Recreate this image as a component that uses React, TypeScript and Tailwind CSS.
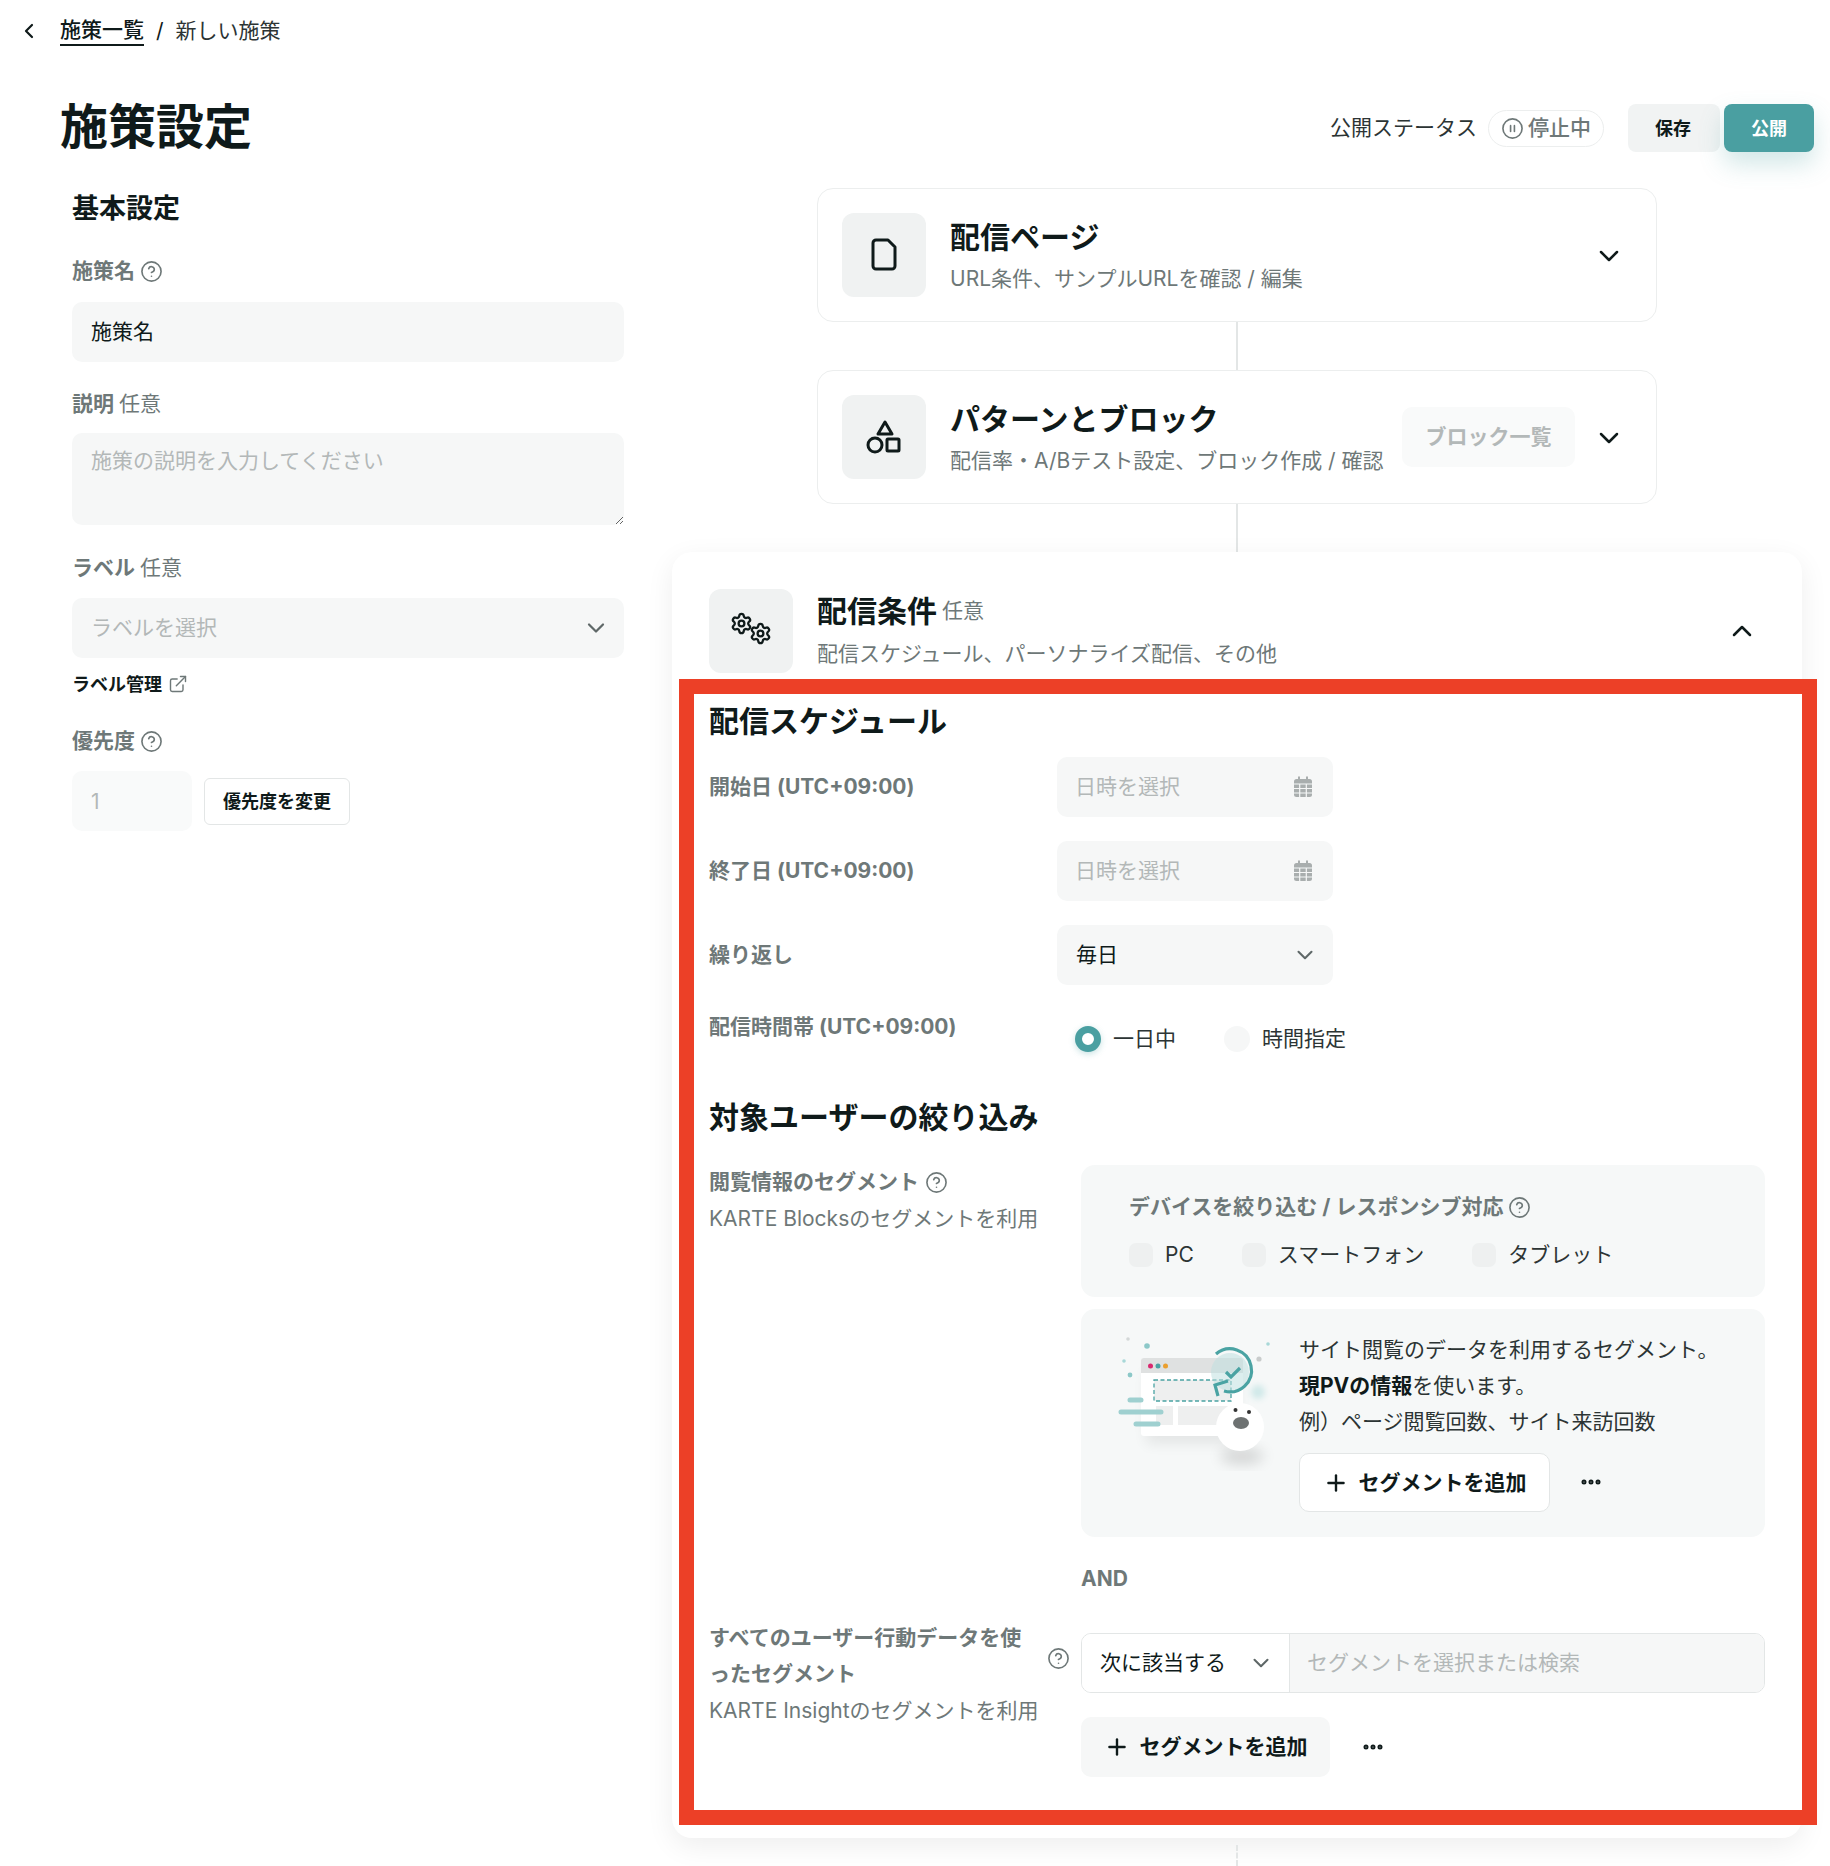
import React from 'react';
import { ChevronDown, ChevronLeft, ChevronUp, CircleHelp, CirclePause, Ellipsis, ExternalLink, Plus, Settings } from 'lucide-react';

const Help = ({ size = 23 }: { size?: number }) => <CircleHelp size={size} strokeWidth={1.7} className="text-[#6e7878] shrink-0" />;

const Label = ({ children, opt, help }: { children: React.ReactNode; opt?: boolean; help?: boolean }) => (
  <div className="flex items-center gap-[5px] h-[30px] text-[21px] leading-[30px] font-bold text-[#6e7878]">
    <span>{children}</span>
    {opt && <span className="font-normal">任意</span>}
    {help && <Help />}
  </div>
);

const Calendar = () => (
  <svg width="20" height="22" viewBox="0 0 20 22" className="shrink-0">
    <rect x="1" y="3" width="18" height="18" rx="2.5" fill="#a9aeae" />
    <rect x="5" y="0.5" width="2" height="4" fill="#a9aeae" />
    <rect x="13" y="0.5" width="2" height="4" fill="#a9aeae" />
    <path d="M1 8h18M1 12.5h18M1 17h18M6.7 8v13M13.3 8v13" stroke="#f6f7f7" strokeWidth="1.2" />
  </svg>
);

const DateField = () => (
  <div className="flex items-center justify-between w-[276px] h-[60px] pl-[18px] pr-[20px] pb-[1px] bg-[#f6f7f7] rounded-[10px] text-[21px] text-[#b3b8b8]">
    <span>日時を選択</span>
    <Calendar />
  </div>
);

const Row = ({ label, children }: { label: string; children: React.ReactNode }) => (
  <div className="flex items-center">
    <div className="w-[348px] text-[21px] font-bold text-[#6e7878]">{label}</div>
    {children}
  </div>
);

const Tile = ({ children }: { children: React.ReactNode }) => (
  <div className="flex items-center justify-center w-[84px] h-[84px] shrink-0 rounded-[12px] bg-[#f0f2f2]">{children}</div>
);

const Checkbox = ({ label }: { label: string }) => (
  <label className="flex items-center gap-[12px] h-[24px] text-[21px] text-[#2c3434]">
    <span className="w-[24px] h-[24px] rounded-[7px] bg-[#eef0f0]" />
    {label}
  </label>
);

const Illustration = () => (
  <svg width="199" height="160" viewBox="0 0 199 160" className="shrink-0">
    <defs>
      <filter id="soft" x="-40%" y="-40%" width="180%" height="180%"><feGaussianBlur stdDeviation="7" /></filter>
      <filter id="soft2" x="-40%" y="-40%" width="180%" height="180%"><feGaussianBlur stdDeviation="3" /></filter>
    </defs>
    <rect x="46" y="50" width="92" height="74" fill="#000" opacity="0.07" filter="url(#soft)" />
    <circle cx="28" cy="19" r="1.8" fill="#d4d8d8" />
    <circle cx="47" cy="26" r="2.8" fill="#8cc8c8" />
    <circle cx="24" cy="41" r="1.8" fill="#a8d8d8" />
    <circle cx="30" cy="55" r="2.4" fill="#8cc8c8" />
    <circle cx="168" cy="24" r="1.8" fill="#a8d8d8" />
    <circle cx="159" cy="39" r="2.6" fill="#c9cccc" />
    <circle cx="158" cy="72" r="7" fill="#cfe8e8" filter="url(#soft2)" />
    <rect x="41" y="38" width="102" height="78" rx="3" fill="#ffffff" />
    <path d="M41 53V41a3 3 0 0 1 3-3h96a3 3 0 0 1 3 3v12z" fill="#dfe1e1" />
    <circle cx="50.5" cy="46" r="2.5" fill="#d9286f" />
    <circle cx="58" cy="46" r="2.5" fill="#4aa3a3" />
    <circle cx="65.5" cy="46" r="2.5" fill="#eb9f2e" />
    <rect x="54" y="60" width="77" height="21" fill="#eeefef" stroke="#4aa3a3" strokeWidth="1.3" strokeDasharray="4 2.5" />
    <rect x="56" y="86" width="17" height="19" fill="#eeefef" />
    <rect x="78" y="86" width="52" height="19" fill="#eeefef" />
    <path d="M30 80h11M21 92h40M36 104h22" stroke="#9fd0d0" strokeWidth="5" strokeLinecap="round" />
    <circle cx="130" cy="52" r="19" fill="#bfe0e0" opacity="0.55" />
    <path d="M116 34a21.5 21.5 0 1 1 8 37" fill="none" stroke="#4aa3a3" strokeWidth="3.2" />
    <path d="M126 52l5 5 9-9" fill="none" stroke="#4aa3a3" strokeWidth="3.2" />
    <path d="M118 76l-3-11 13-4" fill="none" stroke="#4aa3a3" strokeWidth="3.2" />
    <ellipse cx="142" cy="136" rx="22" ry="8" fill="#000" opacity="0.14" filter="url(#soft)" />
    <circle cx="140" cy="107" r="24" fill="#ffffff" />
    <circle cx="135.5" cy="90" r="2" fill="#333" />
    <circle cx="149" cy="92" r="2" fill="#333" />
    <ellipse cx="141" cy="103" rx="8" ry="6" fill="#6d7171" />
  </svg>
);

export default function App() {
  return (
    <div className="relative w-[1830px] h-[1866px] overflow-hidden bg-white text-[#0f1a1a] [font-family:Inter,'Noto_Sans_CJK_JP',sans-serif]">
      <div className="flex items-center h-[62px] pl-[17px] text-[21px]">
        <ChevronLeft size={24} strokeWidth={2.2} />
        <span className="ml-[19px] font-medium border-b-2 border-[#0f1a1a] leading-[28px]">施策一覧</span>
        <span className="ml-[12px]">/</span>
        <span className="ml-[12px] text-[#2c3434]">新しい施策</span>
      </div>

      <div className="flex items-center justify-between mt-[42px] h-[48px] pl-[60px] pr-[16px]">
        <h1 className="-mt-[3px] text-[48px] font-bold leading-[48px]">施策設定</h1>
        <div className="flex items-center">
          <span className="-mt-[1px] text-[21px] text-[#2c3434]">公開ステータス</span>
          <span className="flex items-center gap-[4px] ml-[11px] w-[116px] h-[37px] justify-center rounded-full border border-[#eceeee] text-[21px] font-medium text-[#6e7878]">
            <CirclePause size={23} strokeWidth={1.7} />
            停止中
          </span>
          <button className="ml-[24px] w-[92px] h-[48px] pr-[2px] rounded-[8px] bg-[#f1f3f3] text-[18px] font-bold">保存</button>
          <button className="ml-[4px] w-[90px] h-[48px] rounded-[8px] bg-[#4a9fa1] text-white text-[18px] font-bold shadow-[0_12px_24px_rgba(74,159,161,0.25)]">公開</button>
        </div>
      </div>

      <div className="flex">
        <div className="ml-[72px] w-[552px] shrink-0">
          <h2 className="mt-[39px] text-[27px] font-bold leading-[36px]">基本設定</h2>
          <div className="mt-[29px]"><Label help>施策名</Label></div>
          <input className="mt-[16px] w-full h-[60px] px-[19px] pb-[4px] rounded-[10px] bg-[#f6f7f7] text-[21px] outline-none" defaultValue="施策名" />
          <div className="mt-[27px]"><Label opt>説明</Label></div>
          <textarea className="block mt-[14px] w-full h-[92px] px-[19px] py-[12px] rounded-[10px] bg-[#f6f7f7] text-[21px] outline-none placeholder:text-[#b3b8b8]" placeholder="施策の説明を入力してください" />
          <div className="mt-[28px]"><Label opt>ラベル</Label></div>
          <div className="flex items-center justify-between mt-[15px] h-[60px] pl-[19px] pr-[14px] rounded-[10px] bg-[#f6f7f7] text-[21px] text-[#b3b8b8]">
            ラベルを選択
            <ChevronDown size={28} strokeWidth={1.9} className="text-[#5f6868]" />
          </div>
          <div className="flex items-center gap-[6px] mt-[14px] h-[24px] text-[18px] font-bold">
            ラベル管理
            <ExternalLink size={20} strokeWidth={1.7} className="text-[#6e7878]" />
          </div>
          <div className="mt-[30px]"><Label help>優先度</Label></div>
          <div className="flex items-center gap-[12px] mt-[15px]">
            <div className="flex items-center w-[120px] h-[60px] pl-[19px] pt-[1px] rounded-[10px] bg-[#f9fafa] text-[21px] text-[#b3b8b8]">1</div>
            <button className="w-[146px] h-[47px] rounded-[6px] border border-[#e3e6e6] bg-white text-[18px] font-bold">優先度を変更</button>
          </div>
        </div>

        <div className="ml-[48px] w-[1130px] shrink-0 pt-[36px]">
          <div className="flex items-center ml-[145px] w-[840px] h-[134px] pl-[24px] pr-[31px] rounded-[16px] border border-[#eceeee] bg-white">
            <Tile>
              <svg width="84" height="84" viewBox="0 0 84 84" fill="none" stroke="#0f1a1a" strokeWidth="3" strokeLinejoin="round">
                <path d="M34 27h12l7 7v19a3 3 0 0 1-3 3H34a3 3 0 0 1-3-3V30a3 3 0 0 1 3-3z" />
              </svg>
            </Tile>
            <div className="flex-1 ml-[24px] pt-[3px]">
              <div className="text-[30px] font-bold leading-[40px]">配信ページ</div>
              <div className="mt-[4px] text-[21px] leading-[36px] text-[#6e7878]">URL条件、サンプルURLを確認 / 編集</div>
            </div>
            <ChevronDown size={32} strokeWidth={1.9} className="mt-[2px]" />
          </div>
          <div className="ml-[564px] w-[2px] h-[48px] bg-[#e3e6e6]" />
          <div className="flex items-center ml-[145px] w-[840px] h-[134px] pl-[24px] pr-[31px] rounded-[16px] border border-[#eceeee] bg-white">
            <Tile>
              <svg width="84" height="84" viewBox="0 0 84 84" fill="none" stroke="#0f1a1a" strokeWidth="3" strokeLinejoin="round">
                <path d="M43 27l7 12H36z" />
                <circle cx="33" cy="50" r="7" />
                <rect x="45" y="44" width="12" height="12" rx="1" />
              </svg>
            </Tile>
            <div className="flex-1 ml-[24px] pt-[3px] whitespace-nowrap">
              <div className="text-[30px] font-bold leading-[40px]">パターンとブロック</div>
              <div className="mt-[4px] text-[21px] leading-[36px] text-[#6e7878]">配信率・A/Bテスト設定、ブロック作成 / 確認</div>
            </div>
            <button className="w-[173px] h-[60px] mr-[18px] rounded-[10px] bg-[#f9fafa] text-[21px] font-bold text-[#b3b8b8]">ブロック一覧</button>
            <ChevronDown size={32} strokeWidth={1.9} className="mt-[2px]" />
          </div>
          <div className="ml-[564px] w-[2px] h-[48px] bg-[#e3e6e6]" />

          <div className="h-[1286px] rounded-[20px] bg-white pl-[37px] pt-[37px] shadow-[0_8px_28px_rgba(0,0,0,0.07)]">
            <div className="flex items-center pr-[44px]">
              <Tile>
                <div className="flex">
                  <Settings size={23} strokeWidth={2.4} className="-mt-[5px]" />
                  <Settings size={23} strokeWidth={2.4} className="mt-[5px] -ml-[4px]" />
                </div>
              </Tile>
              <div className="flex-1 ml-[24px]">
                <div className="flex items-center gap-[5px] leading-[40px]">
                  <span className="text-[30px] font-bold">配信条件</span>
                  <span className="text-[21px] text-[#6e7878]">任意</span>
                </div>
                <div className="mt-[5px] text-[21px] leading-[36px] text-[#6e7878]">配信スケジュール、パーソナライズ配信、その他</div>
              </div>
              <ChevronUp size={32} strokeWidth={1.9} />
            </div>

            <h3 className="mt-[28px] text-[30px] font-bold leading-[40px]">配信スケジュール</h3>
            <div className="flex flex-col gap-[24px] mt-[16px]">
              <Row label="開始日 (UTC+09:00)"><DateField /></Row>
              <Row label="終了日 (UTC+09:00)"><DateField /></Row>
              <Row label="繰り返し">
                <div className="flex items-center justify-between w-[276px] h-[60px] pl-[19px] pr-[15px] rounded-[10px] bg-[#f6f7f7] text-[21px]">
                  毎日
                  <ChevronDown size={26} strokeWidth={1.9} className="text-[#5f6868]" />
                </div>
              </Row>
              <div className="flex items-start">
                <div className="w-[348px] text-[21px] leading-[36px] font-bold text-[#6e7878]">配信時間帯 (UTC+09:00)</div>
                <div className="flex items-center h-[36px] mt-[12px] ml-[18px] text-[21px] text-[#2c3434]">
                  <span className="w-[26px] h-[26px] rounded-full border-[7px] border-[#4a9fa1] bg-white shadow-[0_2px_6px_rgba(74,159,161,0.3)]" />
                  <span className="ml-[12px]">一日中</span>
                  <span className="ml-[48px] w-[26px] h-[26px] rounded-full bg-[#f6f7f7]" />
                  <span className="ml-[12px]">時間指定</span>
                </div>
              </div>
            </div>

            <h3 className="mt-[40px] text-[30px] font-bold leading-[40px]">対象ユーザーの絞り込み</h3>
            <div className="flex mt-[28px]">
              <div className="w-[372px] shrink-0">
                <div className="flex items-center gap-[6px] h-[36px] -mt-[1px] text-[21px] font-bold text-[#6e7878]">閲覧情報のセグメント<Help /></div>
                <div className="pt-[1px] text-[21px] leading-[36px] text-[#6e7878]">KARTE Blocksのセグメントを利用</div>
              </div>
              <div className="w-[684px]">
                <div className="h-[132px] rounded-[14px] bg-[#f6f8f8] pl-[48px] pt-[27px]">
                  <div className="flex items-center gap-[5px] h-[30px] text-[21px] font-bold text-[#6e7878]">デバイスを絞り込む / レスポンシブ対応<Help /></div>
                  <div className="flex gap-[48px] mt-[21px]">
                    <Checkbox label="PC" />
                    <Checkbox label="スマートフォン" />
                    <Checkbox label="タブレット" />
                  </div>
                </div>
                <div className="flex h-[228px] mt-[12px] rounded-[14px] bg-[#f6f8f8] pl-[19px] pt-[11px]">
                  <Illustration />
                  <div className="pt-[12px]">
                    <div className="text-[21px] leading-[36px] text-[#2c3434]">サイト閲覧のデータを利用するセグメント。</div>
                    <div className="text-[21px] leading-[36px] text-[#2c3434]"><b className="text-[#0f1a1a]">現PVの情報</b>を使います。</div>
                    <div className="text-[21px] leading-[36px] text-[#2c3434]">例）ページ閲覧回数、サイト来訪回数</div>
                    <div className="flex items-center mt-[13px]">
                      <button className="flex items-center justify-center gap-[10px] w-[251px] h-[59px] rounded-[10px] border border-[#e3e6e6] bg-white text-[21px] font-bold">
                        <Plus size={26} strokeWidth={2.2} />
                        セグメントを追加
                      </button>
                      <Ellipsis size={24} strokeWidth={3} className="ml-[29px] -mt-[1px]" />
                    </div>
                  </div>
                </div>
                <div className="mt-[27px] text-[21px] font-bold leading-[30px] text-[#6e7878]">AND</div>
              </div>
            </div>
            <div className="flex mt-[26px]">
              <div className="flex w-[372px] shrink-0">
                <div className="w-[330px] shrink-0">
                  <div className="text-[21px] leading-[36px] font-bold text-[#6e7878]">すべてのユーザー行動データを使ったセグメント</div>
                  <div className="pt-[1px] text-[21px] leading-[36px] whitespace-nowrap text-[#6e7878]">KARTE Insightのセグメントを利用</div>
                </div>
                <div className="mt-[27px] ml-[8px]"><Help /></div>
              </div>
              <div className="w-[684px] pt-[13px]">
                <div className="flex h-[60px] rounded-[10px] border border-[#e3e6e6] overflow-hidden text-[21px]">
                  <div className="flex items-center justify-between w-[208px] pl-[18px] pr-[15px] border-r border-[#e3e6e6] bg-white">
                    次に該当する
                    <ChevronDown size={26} strokeWidth={1.9} className="text-[#5f6868]" />
                  </div>
                  <div className="flex items-center flex-1 pl-[17px] bg-[#f6f7f7] text-[#b3b8b8]">セグメントを選択または検索</div>
                </div>
                <div className="flex items-center mt-[24px]">
                  <button className="flex items-center justify-center gap-[10px] w-[249px] h-[60px] rounded-[10px] bg-[#f6f7f7] text-[21px] font-bold">
                    <Plus size={26} strokeWidth={2.2} />
                    セグメントを追加
                  </button>
                  <Ellipsis size={24} strokeWidth={3} className="ml-[31px] -mt-[1px]" />
                </div>
              </div>
            </div>
          </div>
          <div className="ml-[564px] mt-[7px] h-[21px] border-l-2 border-dashed border-[#e3e6e6]" />
        </div>
      </div>

      <div className="absolute left-[679px] top-[679px] w-[1138px] h-[1146px] border-[15px] border-[#ec4027] pointer-events-none" />
    </div>
  );
}
